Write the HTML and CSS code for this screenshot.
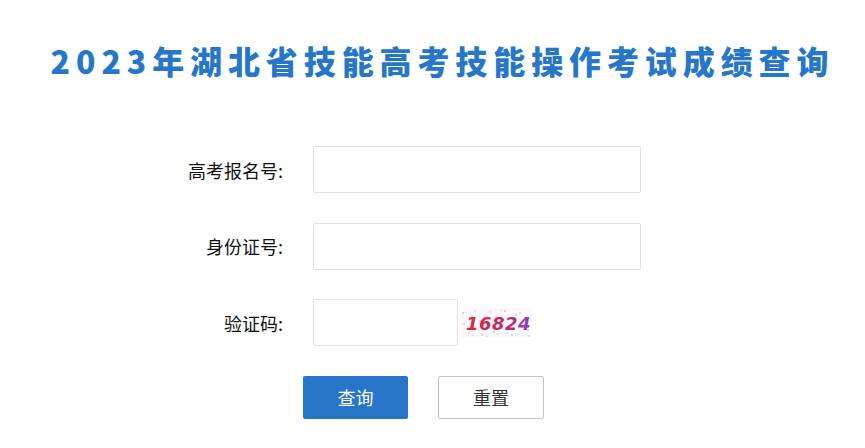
FILE: index.html
```html
<!DOCTYPE html>
<html lang="zh-CN">
<head>
    <meta charset="UTF-8">
    <meta name="viewport" content="width=device-width, initial-scale=1.0">
    <title>2023年湖北省技能高考技能操作考试成绩查询</title>
    <link rel="stylesheet" href="styles.css">
</head>
<body>

    <h1 class="page-title">2023年湖北省技能高考技能操作考试成绩查询</h1>

    <form class="query-form" onsubmit="return false;">
        <div class="form-row">
            <label class="form-label" for="ksh">高考报名号:</label>
            <input class="form-input" type="text" id="ksh">
        </div>

        <div class="form-row">
            <label class="form-label" for="sfzh">身份证号:</label>
            <input class="form-input" type="text" id="sfzh">
        </div>

        <div class="form-row">
            <label class="form-label" for="yzm">验证码:</label>
            <input class="form-input form-input-short" type="text" id="yzm">
            <!-- captcha picture -->
            <svg class="captcha" width="72" height="30" viewBox="0 0 72 30">
                <defs>
                    <linearGradient id="cg" x1="0" y1="0" x2="1" y2="0">
                        <stop offset="0" stop-color="#e0263f"/>
                        <stop offset="0.6" stop-color="#c02a6a"/>
                        <stop offset="1" stop-color="#8a3fc0"/>
                    </linearGradient>
                </defs>
                <rect width="72" height="30" fill="#fdf8fb"/>
                <g fill="#b9a0c8">
                    <circle cx="3" cy="5" r="0.8"/><circle cx="9" cy="25" r="0.7"/>
                    <circle cx="15" cy="3" r="0.7"/><circle cx="22" cy="27" r="0.8"/>
                    <circle cx="30" cy="4" r="0.7"/><circle cx="37" cy="26" r="0.7"/>
                    <circle cx="45" cy="3" r="0.8"/><circle cx="52" cy="27" r="0.7"/>
                    <circle cx="60" cy="5" r="0.7"/><circle cx="68" cy="22" r="0.8"/>
                    <circle cx="4" cy="16" r="0.7"/><circle cx="67" cy="13" r="0.7"/>
                    <circle cx="27" cy="28" r="0.6"/><circle cx="41" cy="2" r="0.6"/>
                    <circle cx="58" cy="26" r="0.6"/><circle cx="13" cy="27" r="0.6"/>
                </g>
                <g fill="#9fc79a">
                    <circle cx="12" cy="8" r="0.7"/><circle cx="34" cy="24" r="0.7"/>
                    <circle cx="56" cy="7" r="0.7"/><circle cx="69" cy="28" r="0.7"/>
                    <circle cx="18" cy="22" r="0.6"/><circle cx="47" cy="25" r="0.6"/>
                </g>
                <text x="6" y="22" font-family="'DejaVu Sans', sans-serif" font-size="18" font-weight="bold" font-style="italic" letter-spacing="0.5" fill="url(#cg)">16824</text>
            </svg>
        </div>

        <div class="button-row">
            <button class="btn btn-primary" type="button">查询</button>
            <button class="btn btn-default" type="reset">重置</button>
        </div>
    </form>

</body>
</html>
```

FILE: styles.css
```css
body {
    margin: 0;
    background: #fff;
    font-family: "Noto Sans CJK SC", "Noto Sans", sans-serif;
    color: #111;
}

/* Title */
.page-title {
    margin: 38px 0 0;
    padding-left: 20px;
    font-size: 32px;
    line-height: 44px;
    font-weight: 900;
    letter-spacing: 5.9px;
    text-align: center;
    color: #2677c9;
}

/* Form */
.query-form {
    margin-top: 64px;
}

.form-row {
    display: flex;
    align-items: center;
    margin-bottom: 29.5px;
}

.form-label {
    width: 133px;
    margin-left: 150px;
    margin-right: 30px;
    text-align: right;
    font-size: 18px;
}

.form-input {
    box-sizing: border-box;
    width: 328px;
    height: 47px;
    border: 1px solid #e2e2e2;
    border-radius: 2px;
    padding: 0 10px;
    font-size: 16px;
    outline: none;
}

.form-input-short {
    width: 145px;
}

.captcha {
    margin-left: 2px;
}

/* Buttons */
.button-row {
    display: flex;
    gap: 30px;
    padding-left: 303px;
}

.btn {
    box-sizing: border-box;
    height: 43px;
    border-radius: 2px;
    font-family: "Noto Sans CJK SC", sans-serif;
    font-size: 18px;
    cursor: pointer;
}

.btn-primary {
    width: 105px;
    background-color: #2675c8;
    border: none;
    color: #fff;
}

.btn-default {
    width: 106px;
    background-color: #fff;
    border: 1px solid #c4c4c4;
    color: #333;
}
```
